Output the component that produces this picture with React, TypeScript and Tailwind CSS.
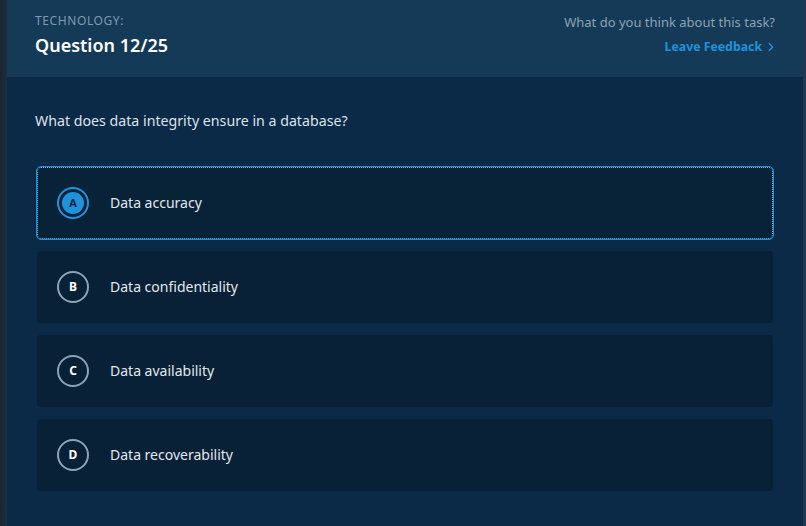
import { ChevronRight } from "lucide-react";

const options = [
  { letter: "A", text: "Data accuracy", selected: true },
  { letter: "B", text: "Data confidentiality", selected: false },
  { letter: "C", text: "Data availability", selected: false },
  { letter: "D", text: "Data recoverability", selected: false },
];

export default function App() {
  return (
    <div
      className="flex h-[526px] w-[806px] overflow-hidden bg-[#1a2736]"
      style={{ fontFamily: '"Noto Sans", "Open Sans", sans-serif' }}
    >
      {/* left edge shadow */}
      <div className="w-[7px] shrink-0 bg-gradient-to-r from-[#1b2530] to-[#1c2f42]" />

      <div className="flex flex-1 flex-col bg-[#0b2a47]">
        {/* Header */}
        <div className="flex h-[77px] items-start justify-between bg-[#153a58] px-[28px] pt-[12px]">
          <div>
            <p className="text-[12px] uppercase tracking-[0.05em] text-[#7f9aae]">Technology:</p>
            <h1 className="mt-[3px] text-[18px] font-semibold leading-[24px] text-white">Question 12/25</h1>
          </div>
          <div className="flex flex-col items-end">
            <p className="mt-[1px] text-[13px] text-[#8ba3b5]">What do you think about this task?</p>
            <button className="-mr-[3px] mt-[5px] flex items-center gap-[2px] text-[12.3px] font-bold text-[#1e93dc]">
              Leave Feedback
              <ChevronRight size={14} strokeWidth={2.5} />
            </button>
          </div>
        </div>

        {/* Body */}
        <div className="px-[28px] pt-[34px]">
          <p className="text-[14.2px] leading-[20px] text-[#dbe3e9]">What does data integrity ensure in a database?</p>

          <div className="mt-[36px] flex flex-col gap-[12px] px-[2px]">
            {options.map((o) => (
              <div
                key={o.letter}
                className={
                  o.selected
                    ? "flex h-[72px] items-center rounded-[4px] border border-dotted border-[#7fc4ee] bg-[#082237] pl-[19px] outline outline-1 outline-[#1f8fd8]"
                    : "flex h-[72px] items-center rounded-[4px] bg-[#082136] pl-[20px]"
                }
              >
                {o.selected ? (
                  <div className="flex h-[32px] w-[32px] items-center justify-center rounded-full border-2 border-[#1d93de]">
                    <div className="flex h-[22px] w-[22px] items-center justify-center rounded-full bg-[#1d93de] text-[11px] font-bold text-[#0a2238]">
                      {o.letter}
                    </div>
                  </div>
                ) : (
                  <div className="flex h-[32px] w-[32px] items-center justify-center rounded-full border-2 border-[#8aa3b6] text-[12px] font-bold text-white">
                    {o.letter}
                  </div>
                )}
                <span className="mb-[2px] ml-[21px] text-[14px] text-[#e1e8ee]">{o.text}</span>
              </div>
            ))}
          </div>
        </div>
      </div>

      <div className="w-[3px] shrink-0 bg-[#23384b]" />
    </div>
  );
}
